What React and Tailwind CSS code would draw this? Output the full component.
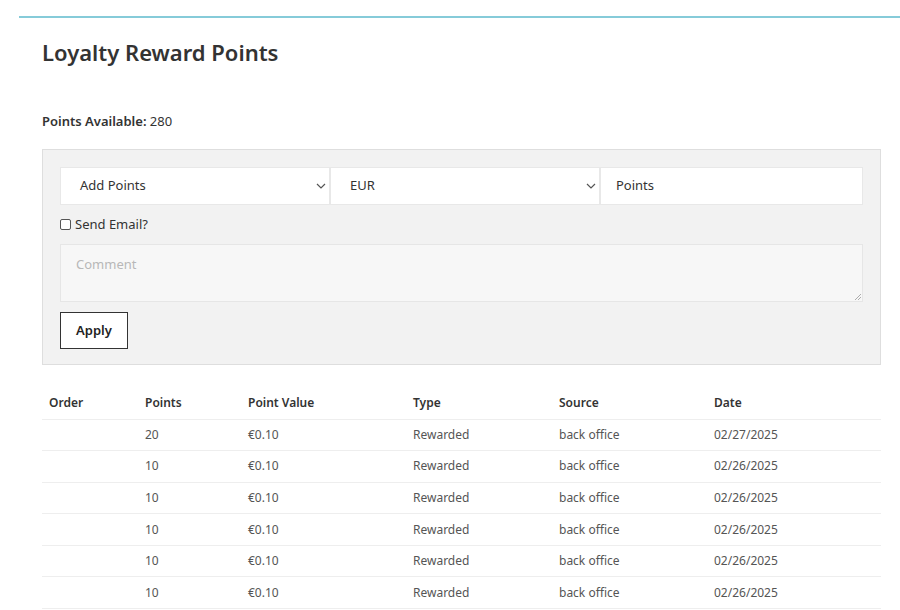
import React from "react";

const rows = [
  ["", "20", "€0.10", "Rewarded", "back office", "02/27/2025"],
  ["", "10", "€0.10", "Rewarded", "back office", "02/26/2025"],
  ["", "10", "€0.10", "Rewarded", "back office", "02/26/2025"],
  ["", "10", "€0.10", "Rewarded", "back office", "02/26/2025"],
  ["", "10", "€0.10", "Rewarded", "back office", "02/26/2025"],
  ["", "10", "€0.10", "Rewarded", "back office", "02/26/2025"],
];

const Chevron = () => (
  <svg width="10" height="6" viewBox="0 0 10 6" className="text-[#555]">
    <path d="M1 1l4 4 4-4" fill="none" stroke="currentColor" strokeWidth="1.2" />
  </svg>
);

export default function App() {
  return (
    <div className="bg-white w-[900px] h-[610px] overflow-hidden text-[#333]" style={{ fontFamily: '"Noto Sans", sans-serif' }}>
      <div className="ml-[19px] mt-[16px] border-t-2 border-[#86cbd9]" />
      <div className="pl-[42px] w-[881px]">
        <h1 className="mt-[18px] text-[22px] font-semibold leading-[32px] text-[#333]">Loyalty Reward Points</h1>
        <div className="mt-[44px] text-[13px] leading-[18px]"><b className="font-semibold">Points Available:</b> 280</div>
        <div className="mt-[19px] bg-[#f2f2f2] border border-[#dedede] px-[17px] pt-[17px] pb-[15px]">
          <div className="flex">
            <div className="flex-1 h-[38px] bg-white border border-[#e8e8e8] flex items-center justify-between pl-[19px] pr-[3px] text-[13px]">
              <span>Add Points</span><Chevron />
            </div>
            <div className="flex-1 h-[38px] bg-white border border-[#e8e8e8] flex items-center justify-between pl-[19px] pr-[3px] text-[13px]">
              <span>EUR</span><Chevron />
            </div>
            <div className="flex-1 h-[38px] bg-white border border-[#e8e8e8] flex items-center pl-[15px] text-[13px]">
              <span>Points</span>
            </div>
          </div>
          <label className="flex items-center gap-[4px] mt-[9px] text-[13px] leading-[20px]">
            <span className="w-[11px] h-[11px] border border-[#555] rounded-[2px] bg-white" />
            Send Email?
          </label>
          <div className="mt-[10px] h-[58px] bg-[#f7f7f7] border border-[#e6e6e6] px-[15px] pt-[10px] text-[13px] text-[#b8b8b8] relative">
            Comment
            <svg className="absolute right-[1px] bottom-[1px]" width="6" height="6" viewBox="0 0 6 6"><path d="M0 6L6 0M3 6L6 3" stroke="#999" strokeWidth="0.8" /></svg>
          </div>
          <button className="mt-[10px] h-[37px] w-[68px] border border-[#333] bg-white text-[13px] font-semibold text-[#222]">Apply</button>
        </div>
        <table className="mt-[22px] w-full text-[12px] border-collapse">
          <thead>
            <tr className="h-[32px] border-b border-[#eee] text-left">
              {["Order", "Points", "Point Value", "Type", "Source", "Date"].map((h, i) => (
                <th key={h} className={"font-semibold text-[#333] pl-[7px] " + ["w-[96px]", "w-[103px]", "w-[165px]", "w-[146px]", "w-[155px]", ""][i]}>{h}</th>
              ))}
            </tr>
          </thead>
          <tbody>
            {rows.map((r, i) => (
              <tr key={i} className="h-[31.6px] border-b border-[#eee] text-[#555]">
                {r.map((c, j) => <td key={j} className="pl-[7px]">{c}</td>)}
              </tr>
            ))}
          </tbody>
        </table>
      </div>
    </div>
  );
}
